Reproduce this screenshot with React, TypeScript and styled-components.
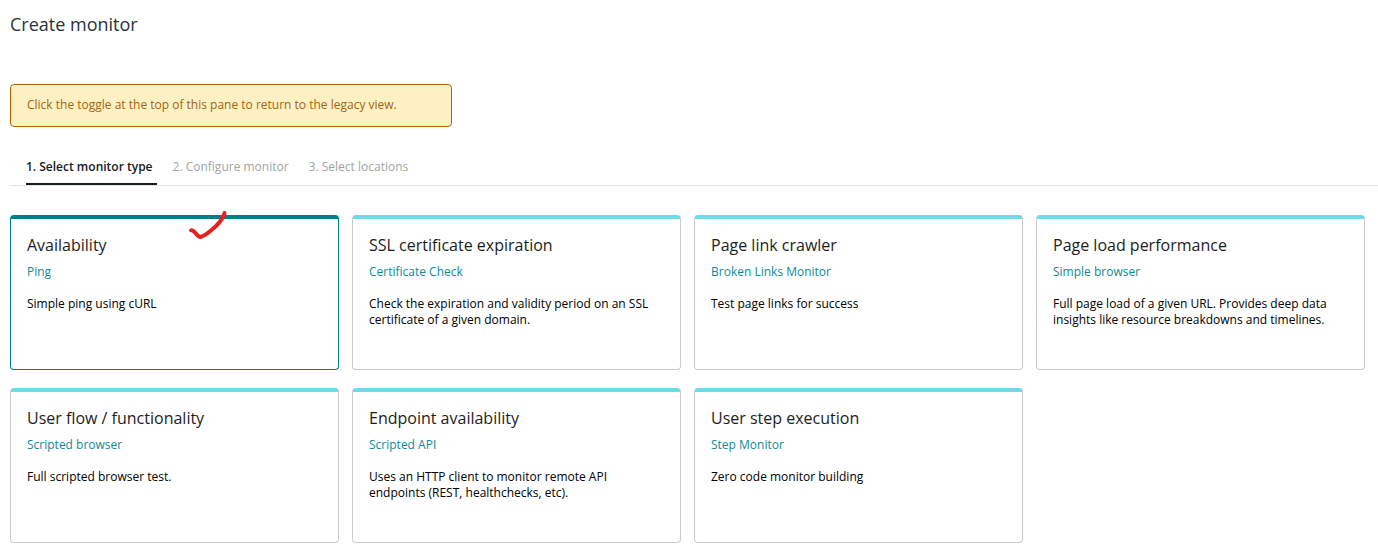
import React, { useState } from "react";
import styled, { createGlobalStyle } from "styled-components";

const GlobalStyle = createGlobalStyle`
  * { box-sizing: border-box; }
  body {
    margin: 0;
    background: #ffffff;
    color: #000000;
    font-family: "Open Sans", "Noto Sans", sans-serif;
    font-size: 12px;
    line-height: 16px;
  }
`;

const Page = styled.main`
  padding: 12px 0 14px 10px;
`;

const Title = styled.h1`
  margin: 0 0 48px;
  font-size: 18px;
  line-height: 24px;
  font-weight: 400;
  color: #293338;
`;

const Notice = styled.p`
  width: 442px;
  max-width: 100%;
  margin: 0 0 24px;
  padding: 12px 16px 13px;
  line-height: 16px;
  border: 1px solid #b06500;
  border-radius: 4px;
  background: #fdf1c4;
  color: #a8640a;
`;

const Steps = styled.nav`
  display: flex;
  gap: 16px;
  padding: 0 16px;
  border-bottom: 1px solid #e3e4e4;
`;

const Step = styled.button<{ $current?: boolean }>`
  padding: 8px 4px 8px 0;
  border: 0;
  border-bottom: 2px solid ${(p) => (p.$current ? "#17201f" : "transparent")};
  background: none;
  font: inherit;
  font-weight: ${(p) => (p.$current ? 600 : 400)};
  color: ${(p) => (p.$current ? "#17201f" : "#9fa5a5")};
`;

const Cards = styled.section`
  display: grid;
  grid-template-columns: repeat(4, 1fr);
  gap: 18px 13px;
  padding: 29px 13px 0 0;
`;

const Card = styled.button<{ $selected: boolean }>`
  position: relative;
  display: flex;
  flex-direction: column;
  align-items: flex-start;
  min-height: 155px;
  padding: 18px 16px 16px;
  border: 1px solid ${(p) => (p.$selected ? "#007e8a" : "#c9cccd")};
  border-top: 0;
  border-radius: 4px;
  background: linear-gradient(${(p) => (p.$selected ? "#007e8a, #007e8a" : "#6ddbe3, #6ddbe3")})
    top / 100% 4px no-repeat border-box #ffffff;
  font: inherit;
  color: #000000;
  text-align: left;
  cursor: pointer;
`;

const CardTitle = styled.span`
  font-size: 16px;
  line-height: 24px;
  color: #1d1d1d;
`;

const CardKind = styled.span`
  margin: 7px 0 16px;
  color: #0f8a98;
`;

const CheckMark = styled.svg`
  position: absolute;
  top: -6px;
  left: 176px;
  width: 44px;
  height: 32px;
`;

const steps = ["1. Select monitor type", "2. Configure monitor", "3. Select locations"];

const monitors = [
  { title: "Availability", kind: "Ping", text: "Simple ping using cURL" },
  {
    title: "SSL certificate expiration",
    kind: "Certificate Check",
    text: "Check the expiration and validity period on an SSL certificate of a given domain.",
  },
  { title: "Page link crawler", kind: "Broken Links Monitor", text: "Test page links for success" },
  {
    title: "Page load performance",
    kind: "Simple browser",
    text: "Full page load of a given URL. Provides deep data insights like resource breakdowns and timelines.",
  },
  { title: "User flow / functionality", kind: "Scripted browser", text: "Full scripted browser test." },
  {
    title: "Endpoint availability",
    kind: "Scripted API",
    text: "Uses an HTTP client to monitor remote API endpoints (REST, healthchecks, etc).",
  },
  { title: "User step execution", kind: "Step Monitor", text: "Zero code monitor building" },
];

export default function App() {
  const [selected, setSelected] = useState(0);

  return (
    <>
      <GlobalStyle />
      <Page>
        <Title>Create monitor</Title>
        <Notice>Click the toggle at the top of this pane to return to the legacy view.</Notice>
        <Steps aria-label="Steps">
          {steps.map((label, i) => (
            <Step key={label} type="button" $current={i === 0} aria-current={i === 0 ? "step" : undefined}>
              {label}
            </Step>
          ))}
        </Steps>
        <Cards aria-label="Monitor type">
          {monitors.map((m, i) => (
            <Card
              key={m.title}
              type="button"
              $selected={i === selected}
              aria-pressed={i === selected}
              onClick={() => setSelected(i)}
            >
              <CardTitle>{m.title}</CardTitle>
              <CardKind>{m.kind}</CardKind>
              <span>{m.text}</span>
              {i === selected && (
                <CheckMark viewBox="0 0 44 32" aria-hidden="true">
                  <path
                    d="M4 21.300C7.500 20.300 9.500 27.500 13 28C18 27.500 25 20.500 29 17C32.500 13.500 36.500 8.500 37.500 4"
                    fill="none"
                    stroke="#e8201f"
                    strokeWidth="4"
                    strokeLinecap="round"
                    strokeLinejoin="round"
                  />
                </CheckMark>
              )}
            </Card>
          ))}
        </Cards>
      </Page>
    </>
  );
}
